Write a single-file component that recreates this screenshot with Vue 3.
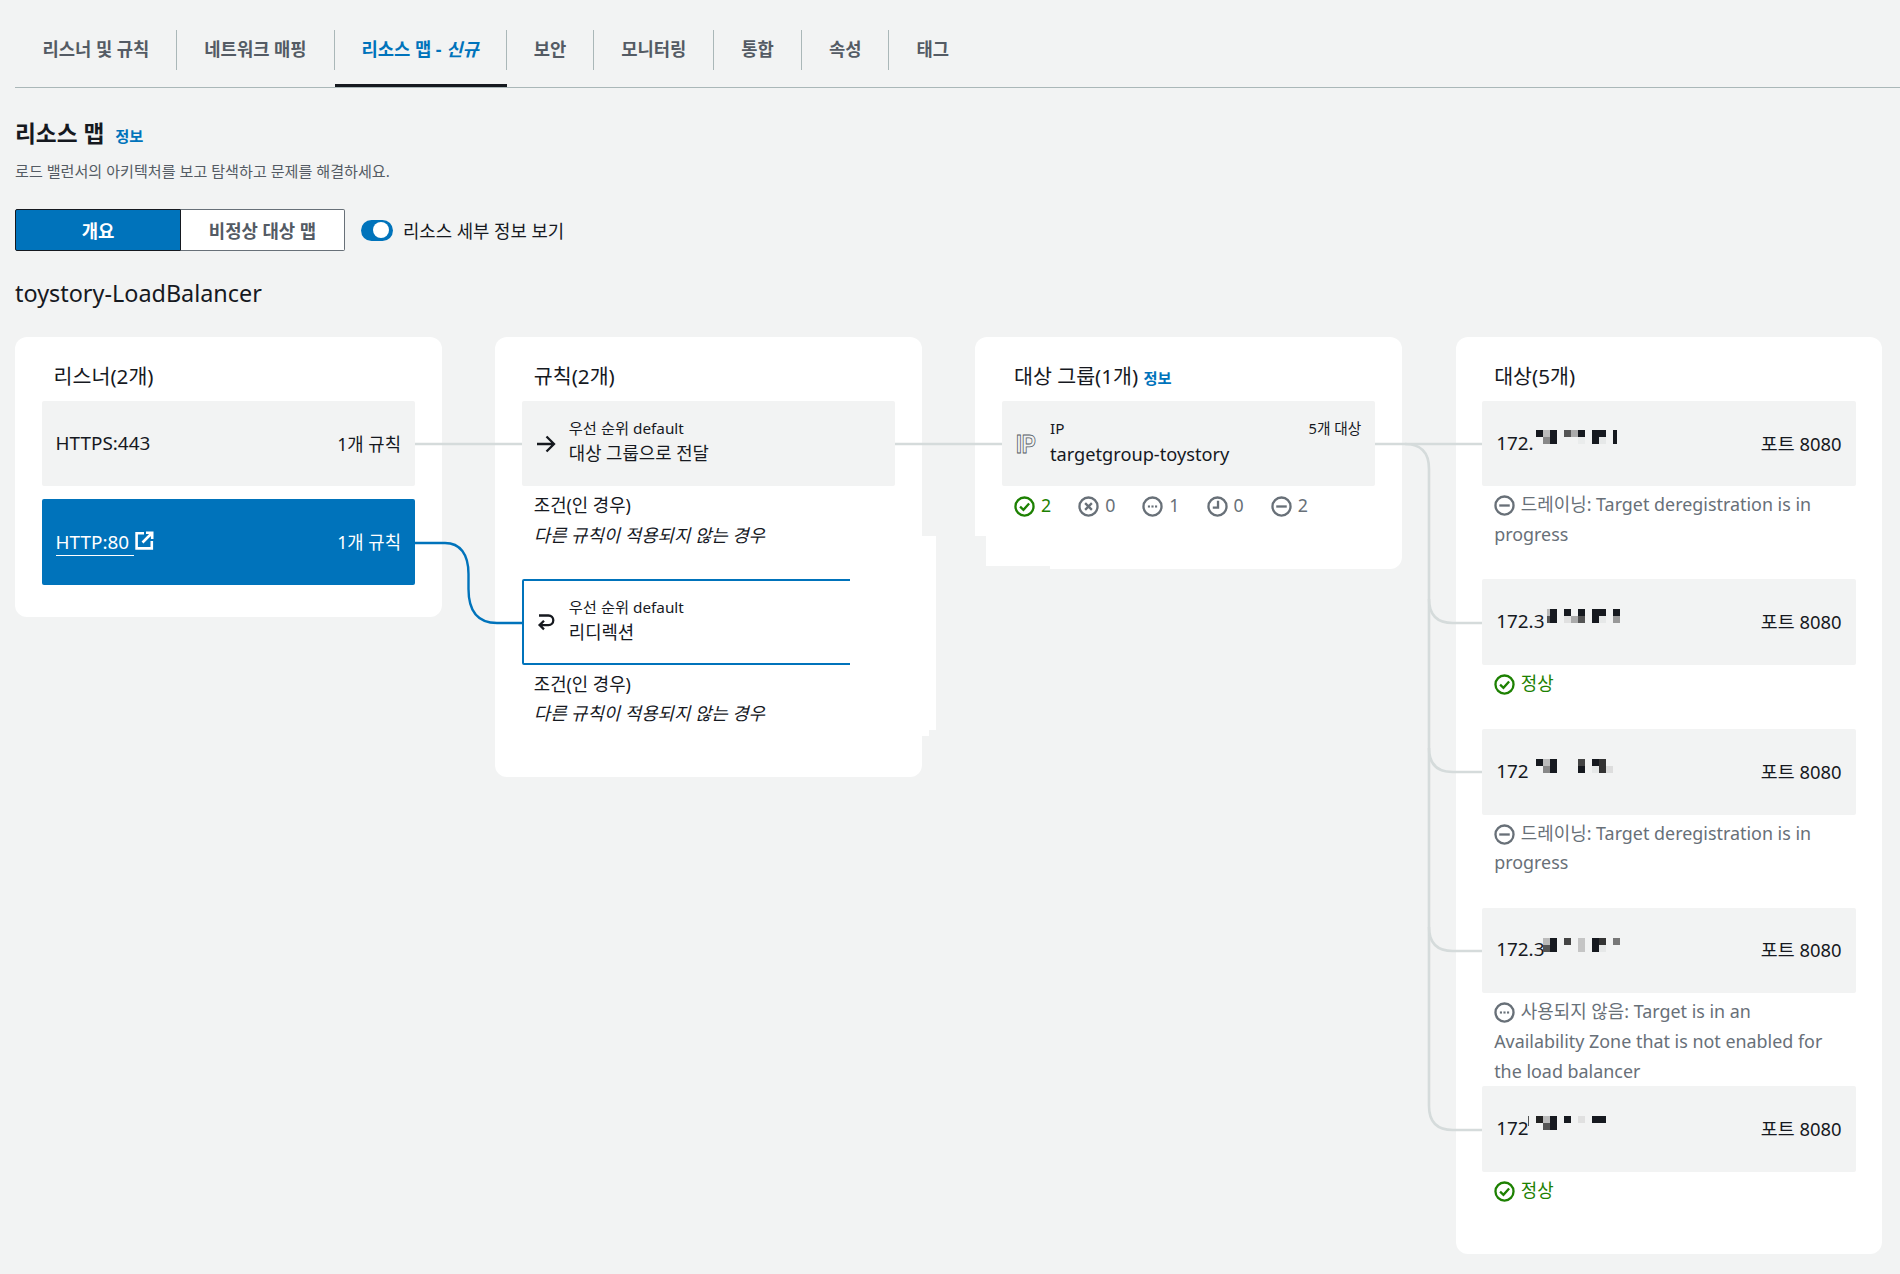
<template>
  <div class="page">
    <!-- 탭 -->
    <nav class="tabs">
      <a v-for="t in tabs" :key="t.label" class="tab" :class="{ active: t.active }">
        <span class="tab-label">{{ t.label }}<i v-if="t.active"> 신규</i></span>
      </a>
    </nav>

    <div class="head">
      <h2 class="head-title">리소스 맵 <a class="info">정보</a></h2>
      <p class="head-desc">로드 밸런서의 아키텍처를 보고 탐색하고 문제를 해결하세요.</p>
    </div>

    <div class="controls">
      <div class="segment">
        <button class="seg seg-on">개요</button>
        <button class="seg">비정상 대상 맵</button>
      </div>
      <span class="toggle"><span class="knob"></span></span>
      <span class="toggle-label">리소스 세부 정보 보기</span>
    </div>

    <div class="lb-name">toystory-LoadBalancer</div>

    <div class="map">
      <!-- 리스너 -->
      <section class="card card-listeners">
        <h3 class="card-title">리스너(2개)</h3>
        <div class="item between">
          <span class="addr">HTTPS:443</span>
          <span>1개 규칙</span>
        </div>
        <div class="item between item-on">
          <span class="http">
            <span class="http-link addr">HTTP:80 </span>
            <svg class="ext" viewBox="0 0 19 19" width="19" height="19" fill="none" stroke="#fff" stroke-width="2.6">
              <path d="M9 2.2H1.6V17.4H16.8V10" />
              <path d="M7.5 11.5L16.5 2.5M11 1.8H17.2V8" />
            </svg>
          </span>
          <span>1개 규칙</span>
        </div>
      </section>

      <!-- 규칙 -->
      <section class="card card-rules">
        <h3 class="card-title">규칙(2개)</h3>
        <div class="row">
          <div class="item rule">
            <svg class="rule-icon" viewBox="0 0 20 20" width="20" height="20" fill="none" stroke="#16191f" stroke-width="2.3">
              <path d="M1 10H18M10.5 2.5L18 10L10.5 17.5" />
            </svg>
            <div class="rule-text">
              <div class="small">우선 순위 default</div>
              <div class="main">대상 그룹으로 전달</div>
            </div>
          </div>
          <div class="cond">
            <div>조건(인 경우)</div>
            <div class="cond-it">다른 규칙이 적용되지 않는 경우</div>
          </div>
        </div>
        <div class="row">
          <div class="item rule rule-on">
            <svg class="rule-icon" viewBox="0 0 20 20" width="20" height="20" fill="none" stroke="#16191f" stroke-width="2.3">
              <path d="M3 3.5H12.5A4.8 4.8 0 0 1 12.5 13.1H4M8 8.8L3.6 13.1L8 17.4" />
            </svg>
            <div class="rule-text">
              <div class="small">우선 순위 default</div>
              <div class="main">리디렉션</div>
            </div>
          </div>
          <div class="cond">
            <div>조건(인 경우)</div>
            <div class="cond-it">다른 규칙이 적용되지 않는 경우</div>
          </div>
        </div>
        <div class="patch patch-a"></div>
        <div class="patch patch-b"></div>
      </section>

      <!-- 대상 그룹 -->
      <section class="card card-group">
        <h3 class="card-title">대상 그룹(1개) <a class="info">정보</a></h3>
        <div class="item group">
          <span class="ip-mark">IP</span>
          <div class="rule-text group-text">
            <div class="small between"><span>IP</span><span class="count">5개 대상</span></div>
            <div class="main group-name">targetgroup-toystory</div>
          </div>
        </div>
        <div class="stats">
          <span v-for="s in stats" :key="s.kind" class="stat" :class="{ ok: s.kind === 'ok' }">
            <svg class="st-icon" viewBox="0 0 20 20" width="21" height="21" fill="none" stroke="currentColor" stroke-width="2.2">
              <circle cx="10" cy="10" r="8.6" />
              <path v-if="icons[s.kind]" :d="icons[s.kind]" />
              <g v-if="s.kind === 'dots'" fill="currentColor" stroke="none">
                <rect x="5.6" y="9" width="2" height="2" /><rect x="9" y="9" width="2" height="2" /><rect x="12.4" y="9" width="2" height="2" />
              </g>
            </svg>
            <span>{{ s.n }}</span>
          </span>
        </div>
        <div class="patch-grey patch-c"></div>
        <div class="patch-grey patch-d"></div>
      </section>

      <!-- 대상 -->
      <section class="card card-targets">
        <h3 class="card-title">대상(5개)</h3>
        <div v-for="(t, i) in targets" :key="i" class="row" :class="{ short: t.short }">
          <div class="item between target">
            <span class="addr">{{ t.ip }}</span>
            <span class="port">포트 8080</span>
            <svg class="mosaic" :class="{ up: i === 0 }" width="100" height="14">
              <rect v-for="(c, j) in t.cells" :key="j" :x="c[0] * 7" :y="c[1] * 7" :width="c[3] || 7" height="7" :fill="c[2]" />
            </svg>
            <span v-if="t.sliver" class="sliver"></span>
          </div>
          <div class="status" :class="{ ok: t.kind === 'ok' }">
            <svg class="st-icon" viewBox="0 0 20 20" width="21" height="21" fill="none" stroke="currentColor" stroke-width="2.2">
              <circle cx="10" cy="10" r="8.6" />
              <path v-if="icons[t.kind]" :d="icons[t.kind]" />
              <g v-if="t.kind === 'dots'" fill="currentColor" stroke="none">
                <rect x="5.6" y="9" width="2" height="2" /><rect x="9" y="9" width="2" height="2" /><rect x="12.4" y="9" width="2" height="2" />
              </g>
            </svg>
            {{ t.status }}
          </div>
        </div>
      </section>

      <!-- 연결선 -->
      <svg class="lines" width="1900" height="936" viewBox="0 338 1900 936" fill="none">
        <g stroke="#d5dbdb" stroke-width="2.6">
          <path d="M415 445H522M895 445H1002M1375 445H1482" />
          <path d="M1405 445Q1429 445 1429 470V1107Q1429 1131 1453 1131H1482" />
          <path d="M1429 600Q1429 624 1453 624H1482" />
          <path d="M1429 749Q1429 773 1453 773H1482" />
          <path d="M1429 928Q1429 952 1453 952H1482" />
        </g>
        <path d="M415 544H445C460 544 468.500 555 468.500 575V590C468.500 612 478 624 497 624H522" stroke="#0073bb" stroke-width="2.4" />
      </svg>
    </div>
  </div>
</template>

<script setup>
const tabs = [
  { label: '리스너 및 규칙' },
  { label: '네트워크 매핑' },
  { label: '리소스 맵 -', active: true },
  { label: '보안' },
  { label: '모니터링' },
  { label: '통합' },
  { label: '속성' },
  { label: '태그' },
]

const icons = {
  ok: 'M5.8 10.2L9 13.2L14.4 7.2',
  x: 'M6.8 6.8L13.2 13.2M13.2 6.800L6.8 13.2',
  clock: 'M10.500 4.500V11H5.500',
  minus: 'M5 10H15',
}

const stats = [
  { kind: 'ok', n: 2 },
  { kind: 'x', n: 0 },
  { kind: 'dots', n: 1 },
  { kind: 'clock', n: 0 },
  { kind: 'minus', n: 2 },
]

const K = '#16191f'
const draining = '드레이닝: Target deregistration is in progress'

// 가려진 IP 모자이크: [열, 행, 색, 폭]
const targets = [
  {
    ip: '172.', kind: 'minus', status: draining,
    cells: [[0, 0, K], [1, 0, '#bbb'], [2, 0, K], [4, 0, '#555'], [5, 0, '#aaa'], [6, 0, K], [8, 0, K], [9, 0, K], [11, 0, K, 4],
      [1, 1, '#888'], [2, 1, K], [6, 1, '#eaecec'], [8, 1, K], [9, 1, '#e6e8e8'], [11, 1, K, 4]],
  },
  {
    ip: '172.3', kind: 'ok', status: '정상', short: true,
    cells: [[1.57, 0, '#bbb', 3], [2, 0, K], [4, 0, K], [6, 0, K], [8, 0, K], [9, 0, K], [11, 0, K],
      [1.57, 1, '#555', 3], [2, 1, K], [4, 1, '#e0e0e0'], [5, 1, '#aaa'], [6, 1, '#555'], [8, 1, K], [9, 1, '#e6e8e8'], [11, 1, '#999']],
  },
  {
    ip: '172', kind: 'minus', status: draining,
    cells: [[0, 0, K], [1, 0, '#bbb'], [2, 0, K], [6, 0, '#444'], [8, 0, K], [9, 0, '#333'],
      [1, 1, '#888'], [2, 1, K], [6, 1, K], [8, 1, '#e6e8e8'], [9, 1, '#333'], [10, 1, '#ddd']],
  },
  {
    ip: '172.3', kind: 'dots', status: '사용되지 않음: Target is in an Availability Zone that is not enabled for the load balancer',
    cells: [[1, 0, '#bbb'], [2, 0, K], [4, 0, '#444'], [6, 0, '#c5c5c5'], [8, 0, K], [9, 0, '#333'], [11, 0, '#777'],
      [1, 1, '#555'], [2, 1, K], [6, 1, '#c5c5c5'], [8, 1, K], [9, 1, '#e6e8e8']],
  },
  {
    ip: '172', kind: 'ok', status: '정상', sliver: true,
    cells: [[0, 0, '#222'], [1, 0, '#bbb'], [2, 0, K], [4, 0, K], [6, 0, '#e0e0e0'], [8, 0, K], [9, 0, K],
      [1, 1, '#555'], [2, 1, K]],
  },
]
</script>

<style>
html, body {
  margin: 0;
  background: #f2f3f3;
}
</style>

<style scoped>
.page {
  height: 1274px;
  overflow: hidden;
  font-family: "Noto Sans", "Noto Sans CJK KR", sans-serif;
  font-size: 17.8px;
  color: #16191f;
  background: #f2f3f3;
}

.tabs {
  display: flex;
  margin-left: 15px;
  padding: 30px 0 0 0.5px;
  border-bottom: 1px solid #aab7b8;
}
.tab {
  padding-bottom: 14px;
  border-bottom: 3px solid transparent;
  font-size: 17.7px;
  font-weight: 700;
  color: #545b64;
}
.tab-label {
  display: block;
  height: 40px;
  line-height: 38px;
  padding: 0 27px;
  border-right: 1px solid #aab7b8;
}
.tab:last-child .tab-label { border-right: 0; }
.tab.active { color: #0073bb; border-bottom-color: #16191f; }

.head { margin-left: 15px; margin-top: 29px; }
.head-title {
  margin: 0;
  font-size: 22.7px;
  font-weight: 700;
  line-height: 34px;
}
.info {
  font-size: 15.3px;
  font-weight: 700;
  color: #0073bb;
  margin-left: 5px;
}
.head-desc {
  margin: 6px 0 0;
  font-size: 15.1px;
  line-height: 24px;
  color: #545b64;
}

.controls {
  display: flex;
  align-items: center;
  margin: 26px 0 0 15px;
}
.segment {
  display: flex;
  width: 330px;
  height: 42px;
}
.seg {
  flex: 1;
  padding: 0;
  font: inherit;
  font-weight: 700;
  color: #545b64;
  background: #fff;
  border: 1px solid #687078;
  border-left: 0;
  border-radius: 0 2px 2px 0;
}
.seg-on {
  flex: 0 0 166px;
  color: #fff;
  background: #0073bb;
  border: 1px solid #16191f;
  border-radius: 2px 0 0 2px;
}
.toggle {
  display: flex;
  justify-content: flex-end;
  align-items: center;
  width: 32px;
  height: 21px;
  margin-left: 16px;
  padding-right: 4px;
  box-sizing: border-box;
  border-radius: 11px;
  background: #0073bb;
}
.knob {
  width: 16px;
  height: 16px;
  border-radius: 50%;
  background: #fff;
}
.toggle-label { margin-left: 10px; }

.lb-name {
  margin: 24px 0 0 15px;
  font-size: 23.4px;
  line-height: 36px;
}

.map {
  position: relative;
  display: grid;
  grid-template-columns: repeat(4, 426.6px);
  column-gap: 53.6px;
  align-items: start;
  margin: 26px 0 0 15px;
}
.lines {
  position: absolute;
  top: 0;
  left: -15px;
  pointer-events: none;
}

.card {
  position: relative;
  padding: 0 26.6px;
  background: #fff;
  border-radius: 12px;
}
.card-listeners { height: 280px; }
.card-rules { height: 440px; }
.card-group { height: 232px; }
.card-targets { height: 917px; }
.card-title {
  height: 64px;
  margin: 0;
  padding-left: 12px;
  font-size: 20.6px;
  font-weight: 400;
  line-height: 79px;
}
.card-title .info { margin-left: 0; }

.item {
  box-sizing: border-box;
  height: 85.400px;
  padding: 0 14px;
  background: #f2f3f3;
  border-radius: 2px;
}
.between {
  display: flex;
  justify-content: space-between;
  align-items: center;
}
.item.between { padding-bottom: 2px; }
.addr { font-size: 18.9px; }
.port { font-size: 18.4px; }
.item-on {
  margin-top: 13px;
  color: #fff;
  background: #0073bb;
}
.http { display: flex; align-items: center; }
.http-link {
  border-bottom: 1.500px solid #fff;
  margin-top: 2px;
  white-space: pre;
}
.ext { margin: -2px 0 0 1px; }

.row { height: 178.400px; }
.row.short { height: 150px; }
.rule {
  display: flex;
  align-items: center;
}
.rule-on {
  background: #fff;
  border: 2px solid #0073bb;
  padding-left: 12px;
}
.rule-icon { flex: none; }
.rule-text {
  flex: 1;
  margin-left: 13px;
  margin-top: -5px;
}
.small {
  font-size: 15.3px;
  line-height: 24px;
}
.count { font-size: 14.7px; }
.main { line-height: 26px; }
.group-name {
  margin-top: 1px;
  font-size: 18.2px;
}
.cond {
  padding: 5px 0 0 12px;
  line-height: 29.500px;
}
.cond-it { font-style: italic; }

.group { display: flex; align-items: center; }
.group-text { margin-left: 13px; }
.ip-mark {
  flex: none;
  width: 21px;
  font-family: "Liberation Sans", sans-serif;
  font-size: 25px;
  font-weight: 700;
  line-height: 26px;
  color: transparent;
  -webkit-text-stroke: 0.9px #545b64;
  transform: scaleX(0.84);
  transform-origin: left center;
}
.stats {
  display: flex;
  padding: 5px 0 0 12px;
  color: #687078;
  line-height: 29.500px;
}
.stat {
  display: flex;
  align-items: center;
  gap: 6px;
  width: 64.200px;
}
.ok { color: #1d8102; }

.target { position: relative; }
.mosaic {
  position: absolute;
  top: 30px;
  left: 54px;
}
.mosaic.up { top: 29px; }
.sliver {
  position: absolute;
  top: 30px;
  left: 46px;
  width: 1px;
  height: 10px;
  background: #555;
}
.status {
  padding: 4px 12px 0;
  color: #687078;
  font-size: 17.9px;
  line-height: 29.700px;
}
.status.ok { color: #1d8102; }
.status .st-icon {
  vertical-align: -5px;
  margin-right: 1px;
}

.patch, .patch-grey { position: absolute; }
.patch { background: #fff; }
.patch-grey { background: #f2f3f3; }
.patch-a { left: 355px; top: 199px; width: 86px; height: 194px; }
.patch-b { left: 355px; top: 393px; width: 79px; height: 6px; }
.patch-c { left: 0; top: 199px; width: 11px; height: 33px; }
.patch-d { left: 11px; top: 229px; width: 64px; height: 3px; }
</style>
